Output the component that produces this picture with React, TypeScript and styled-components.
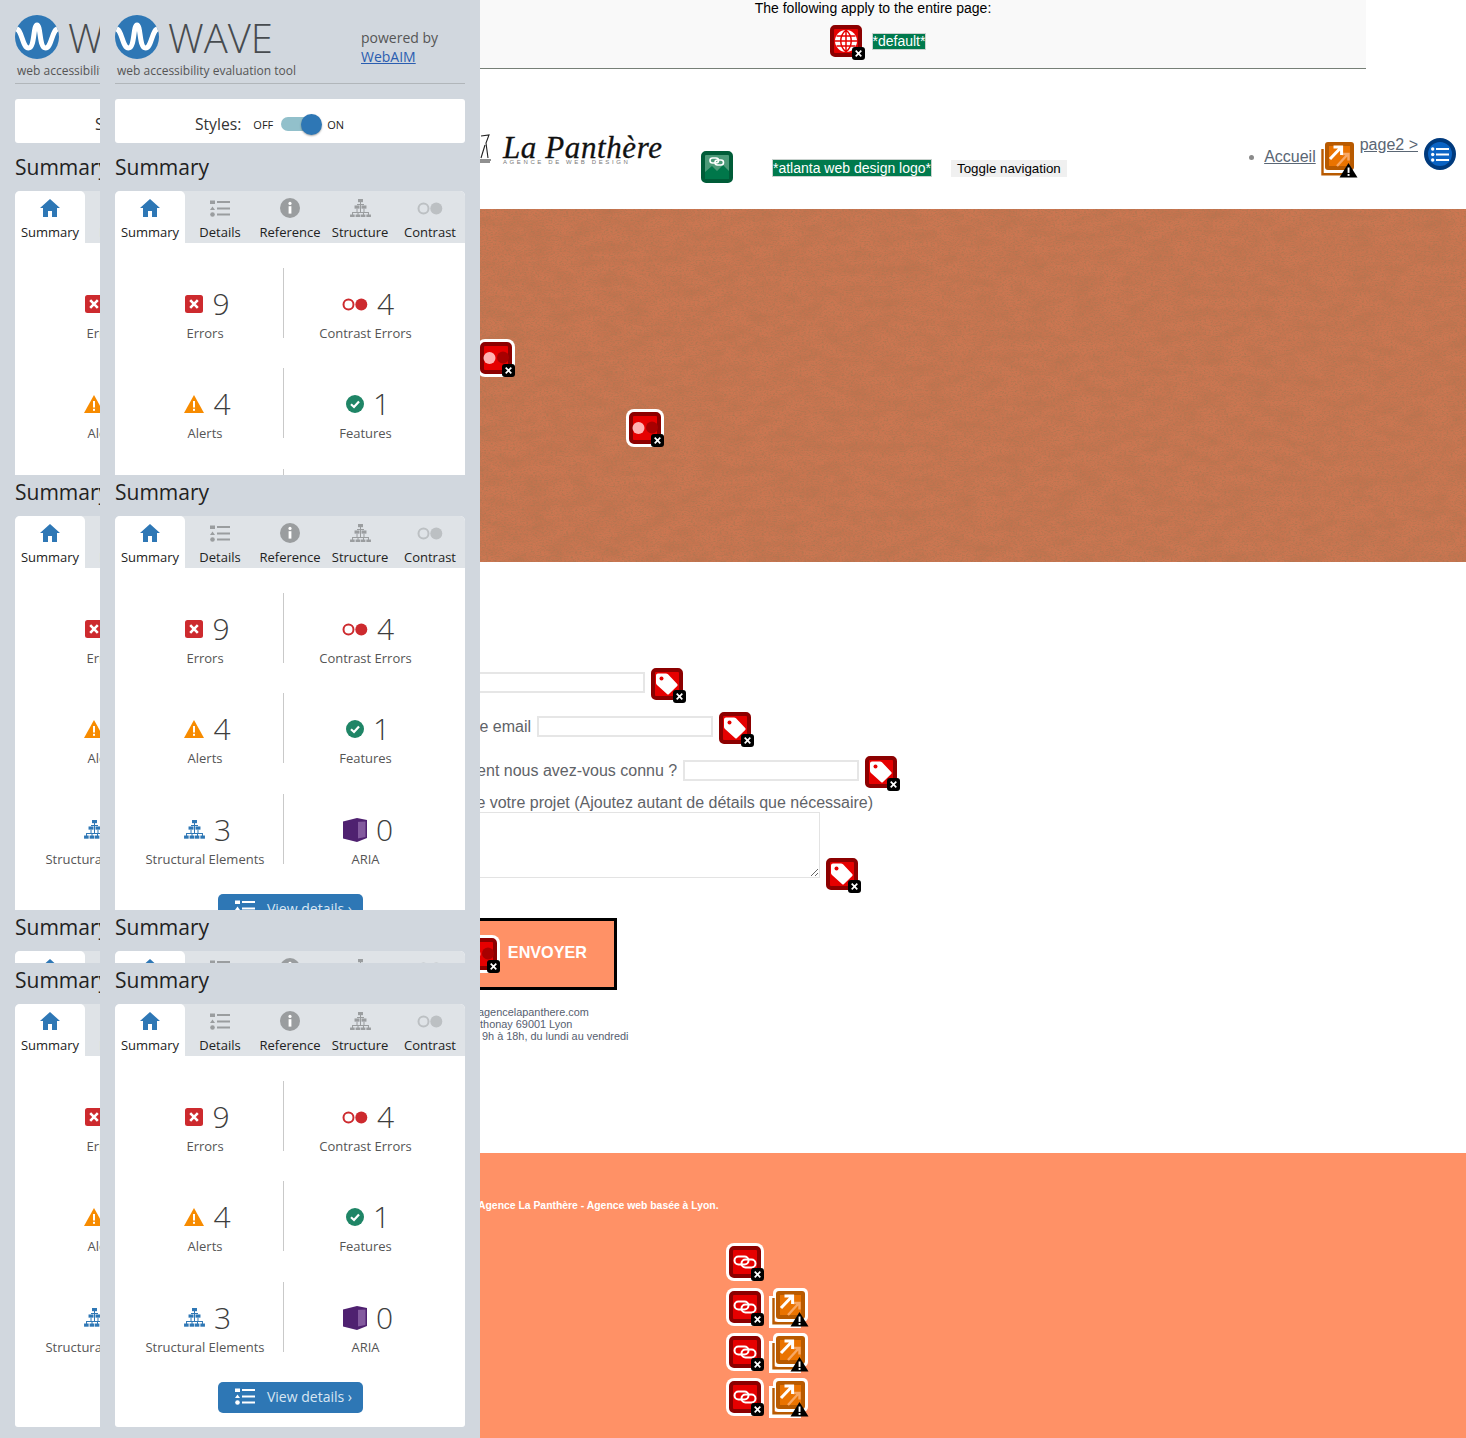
import React from "react";
import styled, { createGlobalStyle } from "styled-components";

const Global = createGlobalStyle`
  html, body { margin: 0; padding: 0; background: #fff; }
  body { font-family: "Liberation Sans", Arial, sans-serif; overflow: hidden; }
  * { box-sizing: border-box; }
`;

const PageRoot = styled.div`
  position: relative;
  width: 1466px;
  height: 1438px;
  overflow: hidden;
`;

/* ---------- WAVE sidebar ---------- */
const Sidebar = styled.aside`
  position: absolute;
  z-index: 5;
  left: 0;
  top: 0;
  width: 480px;
  height: 1438px;
  background: #d1d7de;
  padding-left: 15px;
  display: flex;
  gap: 15px;
  font-family: "Open Sans", sans-serif;
  color: #222;
`;
const ClippedColumn = styled.div`
  width: 85px;
  overflow: hidden;
  flex: none;
`;
const PanelBox = styled.div`
  width: 350px;
  height: 1438px;
  display: flex;
  flex-direction: column;
`;
const PanelHeader = styled.header`
  height: 84px;
  flex: none;
  padding-top: 15px;
  border-bottom: 1px solid #b1b6ba;
  display: flex;
`;
const Brand = styled.div`
  width: 246px;
  flex: none;
`;
const BrandRow = styled.div`
  display: flex;
  align-items: center;
  gap: 9px;
  height: 44px;
`;
const WaveWord = styled.span`
  font-size: 40px;
  font-weight: 300;
  line-height: 46px;
  margin-top: 2px;
  color: #474b4f;
`;
const BrandSub = styled.div`
  font-size: 12px;
  line-height: 16px;
  color: #555;
  margin: 4px 0 0 2px;
  white-space: nowrap;
`;
const Powered = styled.div`
  font-size: 14px;
  line-height: 19px;
  color: #555;
  padding-top: 13px;
  white-space: nowrap;
  a { color: #2a5db0; text-decoration: underline; }
`;
const StylesCard = styled.div`
  flex: none;
  margin-top: 15px;
  height: 44px;
  background: #fff;
  border-radius: 3px;
  display: flex;
  align-items: center;
  justify-content: center;
  padding: 6px 41px 0 0;
`;
const StylesLabel = styled.span`
  font-size: 15.7px;
  color: #333;
  margin-right: 12px;
`;
const SwitchText = styled.span`
  font-size: 11px;
  color: #222;
`;
const SwitchTrack = styled.span`
  position: relative;
  width: 40px;
  height: 14px;
  margin: 0 6px 0 8px;
  border-radius: 7px;
  background: #92c0cb;
`;
const SwitchKnob = styled.span`
  position: absolute;
  right: -1px;
  top: -3.5px;
  width: 21px;
  height: 21px;
  border-radius: 50%;
  background: #2e77b5;
  box-shadow: 0 1px 2px rgba(0, 0, 0, 0.35);
`;
const Slice = styled.section<{ $h: number; $mt?: number }>`
  flex: none;
  height: ${(p) => p.$h}px;
  margin-top: ${(p) => p.$mt ?? 0}px;
  overflow: hidden;
`;
const SliceTitle = styled.h2`
  margin: 0 0 5px;
  height: 36px;
  font-size: 21px;
  font-weight: 400;
  line-height: 35px;
  color: #222;
`;
const Card = styled.div`
  background: #fff;
  border-radius: 5px 5px 3px 3px;
  height: 423px;
`;
const TabBar = styled.div`
  display: flex;
  height: 52px;
  background: #dfe3e7;
  border-radius: 5px 5px 0 0;
`;
const Tab = styled.div<{ $active?: boolean }>`
  width: 70px;
  height: 52px;
  padding-top: 6px;
  display: flex;
  flex-direction: column;
  align-items: center;
  background: ${(p) => (p.$active ? "#fff" : "transparent")};
  border-radius: ${(p) => (p.$active ? "5px 5px 0 0" : "0")};
  color: ${(p) => (p.$active ? "#2e77b5" : "#9a9d9f")};
`;
const TabIcon = styled.span`
  height: 22px;
  display: flex;
  align-items: center;
`;
const TabLabel = styled.span`
  margin-top: 5px;
  font-size: 13px;
  line-height: 16px;
  color: #222;
  white-space: nowrap;
`;
const StatGrid = styled.div`
  padding: 25px 0 0 12px;
  display: grid;
  grid-template-columns: 156px 164px;
  row-gap: 30.4px;
`;
const Stat = styled.div<{ $split?: boolean }>`
  height: 70px;
  padding-top: 18px;
  display: flex;
  flex-direction: column;
  align-items: center;
  border-left: ${(p) => (p.$split ? "1px solid #c9c9c9" : "0")};
`;
const StatTop = styled.div`
  height: 36px;
  padding-left: 5px;
  display: flex;
  align-items: center;
  gap: 9px;
`;
const StatNumber = styled.span`
  font-size: 30px;
  font-weight: 300;
  line-height: 36px;
  color: #3d3d3d;
`;
const StatLabel = styled.span`
  margin-top: 2px;
  font-size: 13px;
  line-height: 18px;
  color: #555;
  white-space: nowrap;
`;
const DetailsButton = styled.div`
  margin: 30px 0 0 103px;
  width: 145px;
  height: 31px;
  padding: 0 0 2px 6px;
  border-radius: 5px;
  background: #2e77b5;
  color: #d8e6f2;
  display: flex;
  align-items: center;
  justify-content: center;
  gap: 12px;
  font-size: 14px;
  white-space: nowrap;
`;

/* ---------- Icons drawn for the panel ---------- */
const WaveLogo = () => (
  <svg width="44" height="44" viewBox="0 0 44 44">
    <defs>
      <clipPath id="wavec">
        <circle cx="22" cy="22" r="22" />
      </clipPath>
    </defs>
    <circle cx="22" cy="22" r="22" fill="#2e77b5" />
    <path
      clipPath="url(#wavec)"
      d="M0 14 C7 12 7 33 13.5 33 C20 33 18 10 22 10 C26 10 24 33 30.5 33 C37 33 37 12 44 14"
      fill="none"
      stroke="#fff"
      strokeWidth="5"
    />
  </svg>
);
const HomeGlyph = () => (
  <svg width="20" height="18" viewBox="0 0 20 18" fill="currentColor">
    <path d="M10 0 L20 9 H17 V18 H12 V12 H8 V18 H3 V9 H0 Z" />
  </svg>
);
const ListGlyph = ({ size = 20 }: { size?: number }) => (
  <svg width={size} height={size * 0.85} viewBox="0 0 20 17" fill="currentColor">
    <rect x="0" y="0.5" width="5" height="3.5" />
    <rect x="7" y="1" width="13" height="2" />
    <path d="M2.5 6.5 L5 10 H0 Z" />
    <rect x="7" y="7.5" width="13" height="2" />
    <circle cx="2.5" cy="14.5" r="2.3" />
    <rect x="7" y="13.5" width="13" height="2" />
  </svg>
);
const InfoGlyph = () => (
  <svg width="20" height="20" viewBox="0 0 20 20">
    <circle cx="10" cy="10" r="10" fill="currentColor" />
    <circle cx="10" cy="5.4" r="1.6" fill="#fff" />
    <rect x="8.6" y="8.2" width="2.8" height="7.4" fill="#fff" />
  </svg>
);
const TreeGlyph = ({ w = 21 }: { w?: number }) => (
  <svg width={w} height={w * 0.9} viewBox="0 0 21 19" fill="currentColor">
    <rect x="8" y="0" width="5" height="3.2" />
    <rect x="4.5" y="6.5" width="5" height="3.2" />
    <rect x="11.5" y="6.5" width="5" height="3.2" />
    <rect x="0" y="15.6" width="4.6" height="3.2" />
    <rect x="5.6" y="15.6" width="4.6" height="3.2" />
    <rect x="10.8" y="15.6" width="4.6" height="3.2" />
    <rect x="16.4" y="15.6" width="4.6" height="3.2" />
    <path d="M10 3h1v2h-1z M7 5h7v1H7z M6.5 9.7h1V13h-1z M13.5 9.7h1V13h-1z M2 13h17v1H2z M2 14h1v2H2z M18 14h1v2h-1z M7.5 14h1v2h-1z M13 14h1v2h-1z M10 5h1v8h-1z" />
  </svg>
);
const ContrastGlyph = ({ w = 26, color = "currentColor" }: { w?: number; color?: string }) => (
  <svg width={w} height={w * 0.5} viewBox="0 0 26 13" fill={color}>
    <circle cx="6.5" cy="6.5" r="5" fill="none" stroke={color} strokeWidth="2" />
    <circle cx="19.3" cy="6.5" r="6" />
  </svg>
);
const ErrorGlyph = () => (
  <svg width="18" height="18" viewBox="0 0 18 18">
    <rect width="18" height="18" rx="2.5" fill="#cd2a2e" />
    <path d="M5.2 5.2 L12.8 12.8 M12.8 5.2 L5.2 12.8" stroke="#fff" strokeWidth="2.6" />
  </svg>
);
const AlertGlyph = () => (
  <svg width="20" height="18" viewBox="0 0 20 18">
    <path d="M10 0 L20 18 H0 Z" fill="#f78b00" />
    <rect x="9" y="6" width="2" height="6.5" fill="#fff" />
    <rect x="9" y="13.8" width="2" height="2" fill="#fff" />
  </svg>
);
const CheckGlyph = () => (
  <svg width="18" height="18" viewBox="0 0 18 18">
    <circle cx="9" cy="9" r="9" fill="#1f8566" />
    <path d="M5 9.3 L8 12 L13 6.4" fill="none" stroke="#fff" strokeWidth="2.2" />
  </svg>
);
const AriaGlyph = () => (
  <svg width="24" height="24" viewBox="0 0 24 24">
    <path d="M0 3.5 L14 0 L24 2 V20 L14 24 L0 20.5 Z" fill="#4f2170" />
    <path d="M12 4 L22.5 3.5 V19 L12 21 Z" fill="#835a9e" />
    <path d="M12 1 H15 V23 H12 Z" fill="#4f2170" />
  </svg>
);

const BlueTree = styled.span`
  color: #2e77b5;
  display: flex;
`;
const WhiteList = styled.span`
  color: #fff;
  display: flex;
`;

const tabs = [
  { label: "Summary", icon: <HomeGlyph />, active: true },
  { label: "Details", icon: <ListGlyph /> },
  { label: "Reference", icon: <InfoGlyph /> },
  { label: "Structure", icon: <TreeGlyph /> },
  { label: "Contrast", icon: <ContrastGlyph color="#bcc0c3" /> },
];

const stats = [
  { label: "Errors", n: 9, icon: <ErrorGlyph /> },
  { label: "Contrast Errors", n: 4, icon: <ContrastGlyph color="#cd2a2e" />, split: true },
  { label: "Alerts", n: 4, icon: <AlertGlyph /> },
  { label: "Features", n: 1, icon: <CheckGlyph />, split: true },
  { label: "Structural Elements", n: 3, icon: <BlueTree><TreeGlyph /></BlueTree> },
  { label: "ARIA", n: 0, icon: <AriaGlyph />, split: true },
];

const SummaryBlock = () => (
  <>
    <SliceTitle>Summary</SliceTitle>
    <Card>
      <TabBar>
        {tabs.map((t) => (
          <Tab key={t.label} $active={t.active}>
            <TabIcon>{t.icon}</TabIcon>
            <TabLabel>{t.label}</TabLabel>
          </Tab>
        ))}
      </TabBar>
      <StatGrid>
        {stats.map((s) => (
          <Stat key={s.label} $split={s.split}>
            <StatTop>
              {s.icon}
              <StatNumber>{s.n}</StatNumber>
            </StatTop>
            <StatLabel>{s.label}</StatLabel>
          </Stat>
        ))}
      </StatGrid>
      <DetailsButton>
        <WhiteList>
          <ListGlyph />
        </WhiteList>
        View details ›
      </DetailsButton>
    </Card>
  </>
);

const Panel = () => (
  <PanelBox>
    <PanelHeader>
      <Brand>
        <BrandRow>
          <WaveLogo />
          <WaveWord>WAVE</WaveWord>
        </BrandRow>
        <BrandSub>web accessibility evaluation tool</BrandSub>
      </Brand>
      <Powered>
        powered by
        <br />
        <a href="#webaim">WebAIM</a>
      </Powered>
    </PanelHeader>
    <StylesCard>
      <StylesLabel>Styles:</StylesLabel>
      <SwitchText>OFF</SwitchText>
      <SwitchTrack>
        <SwitchKnob />
      </SwitchTrack>
      <SwitchText>ON</SwitchText>
    </StylesCard>
    <Slice $h={325} $mt={7}>
      <SummaryBlock />
    </Slice>
    <Slice $h={435}>
      <SummaryBlock />
    </Slice>
    <Slice $h={53}>
      <SummaryBlock />
    </Slice>
    <Slice $h={475}>
      <SummaryBlock />
    </Slice>
  </PanelBox>
);

/* ---------- WAVE markers in the page ---------- */
const Marker = styled.span<{ $outline?: boolean; $tone?: "red" | "green" }>`
  position: relative;
  flex: none;
  display: inline-block;
  width: 32px;
  height: 32px;
  border-radius: 5px;
  border: 4px solid ${(p) => (p.$tone === "green" ? "#005c38" : "#8c0000")};
  background: ${(p) => (p.$tone === "green" ? "#4b9a78" : "#e60000")};
  box-shadow: ${(p) => (p.$outline ? "0 0 0 3px #fff" : "none")};
  svg { display: block; overflow: visible; }
`;
const MarkerBadge = styled.span`
  position: absolute;
  right: -7px;
  bottom: -7px;
  width: 13px;
  height: 13px;
  border-radius: 3px;
  background: #000;
  display: flex;
  align-items: center;
  justify-content: center;
`;
const BadgeX = () => (
  <svg width="7" height="7" viewBox="0 0 7 7">
    <path d="M0.7 0.7 L6.3 6.3 M6.3 0.7 L0.7 6.3" stroke="#fff" strokeWidth="1.7" />
  </svg>
);

const glyphs = {
  contrast: (
    <svg width="24" height="24" viewBox="0 0 24 24">
      <circle cx="19" cy="11.5" r="6" fill="#a80000" />
      <circle cx="5.5" cy="12" r="6" fill="#ffb3b3" />
    </svg>
  ),
  tag: (
    <svg width="24" height="24" viewBox="0 0 24 24">
      <path d="M3 1.5 H11 q1 0 2 .8 L22.2 12 q1 1 0 2 L14 22 q-1 1-2 0 L2 13 q-1-1-1-2 V3.5 q0-2 2-2 Z" fill="#fff" />
      <circle cx="6.5" cy="6.5" r="2" fill="#e60000" />
    </svg>
  ),
  globe: (
    <svg width="24" height="24" viewBox="0 0 24 24" fill="none">
      <circle cx="12" cy="12" r="11" fill="#fff" />
      <path
        d="M1 12 H23 M2.5 7 H21.5 M2.5 17 H21.5 M12 1 V23 M12 1 C5 7 5 17 12 23 M12 1 C19 7 19 17 12 23"
        stroke="#e60000"
        strokeWidth="1.5"
      />
    </svg>
  ),
  link: (
    <svg width="24" height="24" viewBox="0 0 24 24" fill="none" stroke="#fff" strokeWidth="2">
      <rect x="1.5" y="6.5" width="14" height="8" rx="4" />
      <rect x="8.5" y="9.5" width="14" height="8" rx="4" />
    </svg>
  ),
  image: (
    <svg width="24" height="24" viewBox="0 0 24 24">
      <path d="M0 24 V17 L7 11 L12 16 L18 10 L24 16 V24 Z" fill="#00774a" />
      <g fill="none" stroke="#fff" strokeWidth="1.6">
        <rect x="5" y="3" width="8.5" height="5" rx="2.5" />
        <rect x="10" y="5" width="8.5" height="5" rx="2.5" />
      </g>
    </svg>
  ),
};

const WaveMarker = ({
  kind,
  outline,
  badge = true,
  tone,
}: {
  kind: keyof typeof glyphs;
  outline?: boolean;
  badge?: boolean;
  tone?: "red" | "green";
}) => (
  <Marker $outline={outline} $tone={tone}>
    {glyphs[kind]}
    {badge && (
      <MarkerBadge>
        <BadgeX />
      </MarkerBadge>
    )}
  </Marker>
);

const ExternalMarker = ({ outline }: { outline?: boolean }) => (
  <svg width="40" height="40" viewBox="0 0 40 40" style={{ flex: "none" }}>
    {outline && (
      <>
        <path d="M2.5 8 V37.5 H32" fill="none" stroke="#fff" strokeWidth="5" />
        <rect x="4" y="0" width="35" height="34" rx="5" fill="#fff" />
      </>
    )}
    <path d="M4.5 10 V35.2 H30" fill="none" stroke="#b85a00" strokeWidth="2.4" />
    <rect x="7" y="3" width="29" height="28" rx="3" fill="#b85a00" />
    <rect x="11" y="7" width="21" height="20" fill="#ea7300" />
    <path d="M19 27 L30 15 M24 15 H30.5 V21.5" fill="none" stroke="#f7a866" strokeWidth="2.4" />
    <path d="M12 20 L23 8.5 M15.5 8 H23.6 V16" fill="none" stroke="#fff" strokeWidth="3" />
    <path d="M30.5 24 L39.5 38.5 H21.5 Z" fill="#000" />
    <rect x="29.6" y="28.5" width="1.9" height="5.4" fill="#fff" />
    <rect x="29.6" y="35" width="1.9" height="1.9" fill="#fff" />
  </svg>
);

const ListMarker = styled.span`
  flex: none;
  width: 32px;
  height: 32px;
  border-radius: 50%;
  background: #0a63c4;
  border: 4px solid #003a7d;
  color: #fff;
  display: flex;
  align-items: center;
  justify-content: center;
`;
const ListMarkerGlyph = () => (
  <svg width="18" height="15" viewBox="0 0 18 15" fill="#fff">
    <circle cx="1.7" cy="2" r="1.7" />
    <rect x="5" y="1" width="13" height="2" />
    <circle cx="1.7" cy="7.5" r="1.7" />
    <rect x="5" y="6.5" width="13" height="2" />
    <circle cx="1.7" cy="13" r="1.7" />
    <rect x="5" y="12" width="13" height="2" />
  </svg>
);

/* ---------- The page beneath ---------- */
const NoticeBar = styled.div`
  margin-left: 380px;
  width: 986px;
  height: 69px;
  background: #f9f9f9;
  border-bottom: 1px solid #767f76;
  display: flex;
  flex-direction: column;
  align-items: center;
  color: #000;
  font-size: 14px;
  line-height: 16px;
`;
const NoticeRow = styled.div`
  margin-top: 9px;
  padding-left: 10px;
  display: flex;
  align-items: center;
  gap: 10px;
`;
const GreenTag = styled.span`
  background: #007a4d;
  color: #fff;
  border: 1px solid #c9d2ce;
  font-size: 14px;
  line-height: 15px;
  white-space: nowrap;
`;
const SiteHeader = styled.header`
  height: 140px;
  display: flex;
  align-items: flex-start;
  padding-left: 480px;
`;
const SiteLogo = styled.div`
  width: 183px;
  margin-top: 60px;
  position: relative;
  display: flex;
  height: 40px;
  flex: none;
`;
const LogoWord = styled.span`
  margin-left: 23px;
  font-family: "Liberation Serif", serif;
  font-style: italic;
  font-size: 31px;
  line-height: 38px;
  color: #111;
  letter-spacing: 0.6px;
  white-space: nowrap;
  -webkit-text-stroke: 0.3px #111;
`;
const LogoTag = styled.span`
  position: absolute;
  left: 23px;
  top: 30px;
  font-size: 6px;
  line-height: 7px;
  letter-spacing: 2.6px;
  color: #777;
  background: transparent;
  white-space: nowrap;
`;
const HeaderMarker = styled.div`
  margin: 82px 0 0 38px;
`;
const HeaderTag = styled.div`
  margin: 90px 0 0 39px;
`;
const ToggleNav = styled.span`
  margin: 91px 0 0 19px;
  height: 17px;
  padding: 0 6px;
  background: #f0f0f0;
  color: #000;
  font-size: 13.33px;
  line-height: 18px;
  white-space: nowrap;
`;
const SiteNav = styled.nav`
  margin-left: auto;
  padding-right: 10px;
  display: flex;
  align-items: flex-start;
  color: #5a6674;
  font-size: 16px;
  line-height: 18px;
  a { color: #5a6674; text-decoration: underline; }
`;
const NavBullet = styled.span`
  width: 5px;
  height: 5px;
  border-radius: 50%;
  background: #8a8a8a;
  margin: 86px 10px 0 0;
`;
const NavItem = styled.span<{ $top: number; $gap?: number }>`
  margin-top: ${(p) => p.$top}px;
  margin-left: ${(p) => p.$gap ?? 0}px;
  white-space: nowrap;
`;
const Hero = styled.div`
  position: relative;
  height: 353px;
  background: #cc7651;
  overflow: hidden;
`;
const HeroTexture = styled.svg`
  position: absolute;
  inset: 0;
  width: 100%;
  height: 100%;
`;
const HeroPin = styled.span<{ $x: number; $y: number }>`
  position: absolute;
  left: ${(p) => p.$x}px;
  top: ${(p) => p.$y}px;
`;
const ContactForm = styled.form`
  padding: 106px 0 0 380px;
  color: #5f6368;
  font-size: 16px;
  line-height: 18px;
`;
const Row = styled.div<{ $indent: number }>`
  height: 32px;
  margin: 0 0 12px ${(p) => p.$indent}px;
  display: flex;
  align-items: center;
  gap: 6px;
`;
const FieldLabel = styled.label`
  white-space: nowrap;
  margin-top: -2px;
`;
const TextField = styled.input`
  width: 176px;
  height: 21px;
  margin: -4px 0 0;
  padding: 0;
  border: 2px solid #e6e6e6;
  background: #fff;
`;
const WideLabel = styled.div`
  margin: -6px 0 0 3px;
  height: 18px;
  white-space: nowrap;
`;
const AreaRow = styled.div`
  display: flex;
  align-items: flex-start;
  gap: 6px;
`;
const AreaField = styled.textarea`
  display: block;
  width: 440px;
  height: 66px;
  margin: 0;
  border: 1px solid #e3e3e3;
  background: #fff;
`;
const AreaMarker = styled.div`
  margin-top: 46px;
  height: 32px;
`;
const SendButton = styled.div`
  margin-top: 28px;
  width: 237px;
  height: 72px;
  border: 3px solid #000;
  background: #ff9166;
  display: flex;
  align-items: center;
  justify-content: flex-end;
  padding-right: 27px;
  gap: 11px;
  color: #fff;
  font-size: 16.2px;
  font-weight: 700;
`;
const SendLabel = styled.span`
  margin-top: -4px;
`;
const Contact = styled.div`
  margin: 16px 0 0 94px;
  font-size: 10.9px;
  line-height: 12px;
  color: #566070;
  white-space: nowrap;
`;
const ContactLine = styled.div<{ $pad?: number }>`
  padding-left: ${(p) => p.$pad ?? 0}px;
`;
const SiteFooter = styled.footer`
  margin-top: 111px;
  height: 285px;
  background: #ff9166;
  padding: 46px 0 0 478px;
  color: #fff;
`;
const FooterLine = styled.div`
  font-size: 10.4px;
  font-weight: 700;
  line-height: 13px;
  white-space: nowrap;
`;
const LinkStack = styled.div`
  margin: 34px 0 0 251px;
  display: flex;
  flex-direction: column;
  gap: 13px;
`;
const LinkRow = styled.div`
  display: flex;
  height: 32px;
  gap: 8px;
  align-items: flex-start;
`;
const RaisedExternal = styled.span`
  margin-top: -3px;
  display: block;
`;

const Cat = () => (
  <svg width="18" height="30" viewBox="0 0 18 30" fill="none" stroke="#222" strokeWidth="1.1" style={{ position: "absolute", left: -5, top: 5 }}>
    <path d="M6 2 L14 1 L11 9 L13 24 M10 11 L6 24 M1 26 H16 M2 28 H15" />
  </svg>
);

export default function App() {
  return (
    <PageRoot>
      <Global />
      <Sidebar>
        <ClippedColumn>
          <Panel />
        </ClippedColumn>
        <Panel />
      </Sidebar>

      <NoticeBar>
        The following apply to the entire page:
        <NoticeRow>
          <WaveMarker kind="globe" />
          <GreenTag>*default*</GreenTag>
        </NoticeRow>
      </NoticeBar>

      <SiteHeader>
        <SiteLogo>
          <Cat />
          <LogoWord>La Panthère</LogoWord>
          <LogoTag>AGENCE DE WEB DESIGN</LogoTag>
        </SiteLogo>
        <HeaderMarker>
          <WaveMarker kind="image" tone="green" badge={false} />
        </HeaderMarker>
        <HeaderTag>
          <GreenTag>*atlanta web design logo*</GreenTag>
        </HeaderTag>
        <ToggleNav>Toggle navigation</ToggleNav>
        <SiteNav>
          <NavBullet />
          <NavItem $top={79}>
            <a href="#accueil">Accueil</a>
          </NavItem>
          <NavItem $top={70} $gap={2}>
            <ExternalMarker />
          </NavItem>
          <NavItem $top={67} $gap={2}>
            <a href="#page2">page2 &gt;</a>
          </NavItem>
          <NavItem $top={69} $gap={6}>
            <ListMarker>
              <ListMarkerGlyph />
            </ListMarker>
          </NavItem>
        </SiteNav>
      </SiteHeader>

      <Hero>
        <HeroTexture aria-hidden="true">
          <filter id="grain" x="0" y="0" width="100%" height="100%">
            <feTurbulence type="fractalNoise" baseFrequency="0.45 0.8" numOctaves="3" seed="4" />
            <feColorMatrix values="0 0 0 0 0.42  0 0 0 0 0.18  0 0 0 0 0.08  2 0 0 0 -0.82" />
          </filter>
          <filter id="blotch" x="0" y="0" width="100%" height="100%">
            <feTurbulence type="fractalNoise" baseFrequency="0.04 0.09" numOctaves="4" seed="9" />
            <feColorMatrix values="0 0 0 0 0.35  0 0 0 0 0.14  0 0 0 0 0.06  0.5 0 0 0 -0.17" />
          </filter>
          <rect width="100%" height="100%" filter="url(#blotch)" />
          <rect width="100%" height="100%" filter="url(#grain)" />
        </HeroTexture>
        <HeroPin $x={480} $y={133}>
          <WaveMarker kind="contrast" outline />
        </HeroPin>
        <HeroPin $x={629} $y={203}>
          <WaveMarker kind="contrast" outline />
        </HeroPin>
      </Hero>

      <ContactForm>
        <Row $indent={89}>
          <TextField />
          <WaveMarker kind="tag" />
        </Row>
        <Row $indent={71}>
          <FieldLabel>Votre email</FieldLabel>
          <TextField />
          <WaveMarker kind="tag" />
        </Row>
        <Row $indent={50}>
          <FieldLabel>Comment nous avez-vous connu ?</FieldLabel>
          <TextField />
          <WaveMarker kind="tag" />
        </Row>
        <WideLabel>Description de votre projet (Ajoutez autant de détails que nécessaire)</WideLabel>
        <AreaRow>
          <AreaField />
          <AreaMarker>
            <WaveMarker kind="tag" />
          </AreaMarker>
        </AreaRow>
        <SendButton>
          <WaveMarker kind="contrast" outline />
          <SendLabel>ENVOYER</SendLabel>
        </SendButton>
        <Contact>
          <ContactLine $pad={4}>agencelapanthere.com</ContactLine>
          <ContactLine>nthonay 69001 Lyon</ContactLine>
          <ContactLine $pad={8}>9h à 18h, du lundi au vendredi</ContactLine>
        </Contact>
      </ContactForm>

      <SiteFooter>
        <FooterLine>Agence La Panthère - Agence web basée à Lyon.</FooterLine>
        <LinkStack>
          <LinkRow>
            <WaveMarker kind="link" outline />
          </LinkRow>
          {[0, 1, 2].map((i) => (
            <LinkRow key={i}>
              <WaveMarker kind="link" outline />
              <RaisedExternal>
                <ExternalMarker outline />
              </RaisedExternal>
            </LinkRow>
          ))}
        </LinkStack>
      </SiteFooter>
    </PageRoot>
  );
}
